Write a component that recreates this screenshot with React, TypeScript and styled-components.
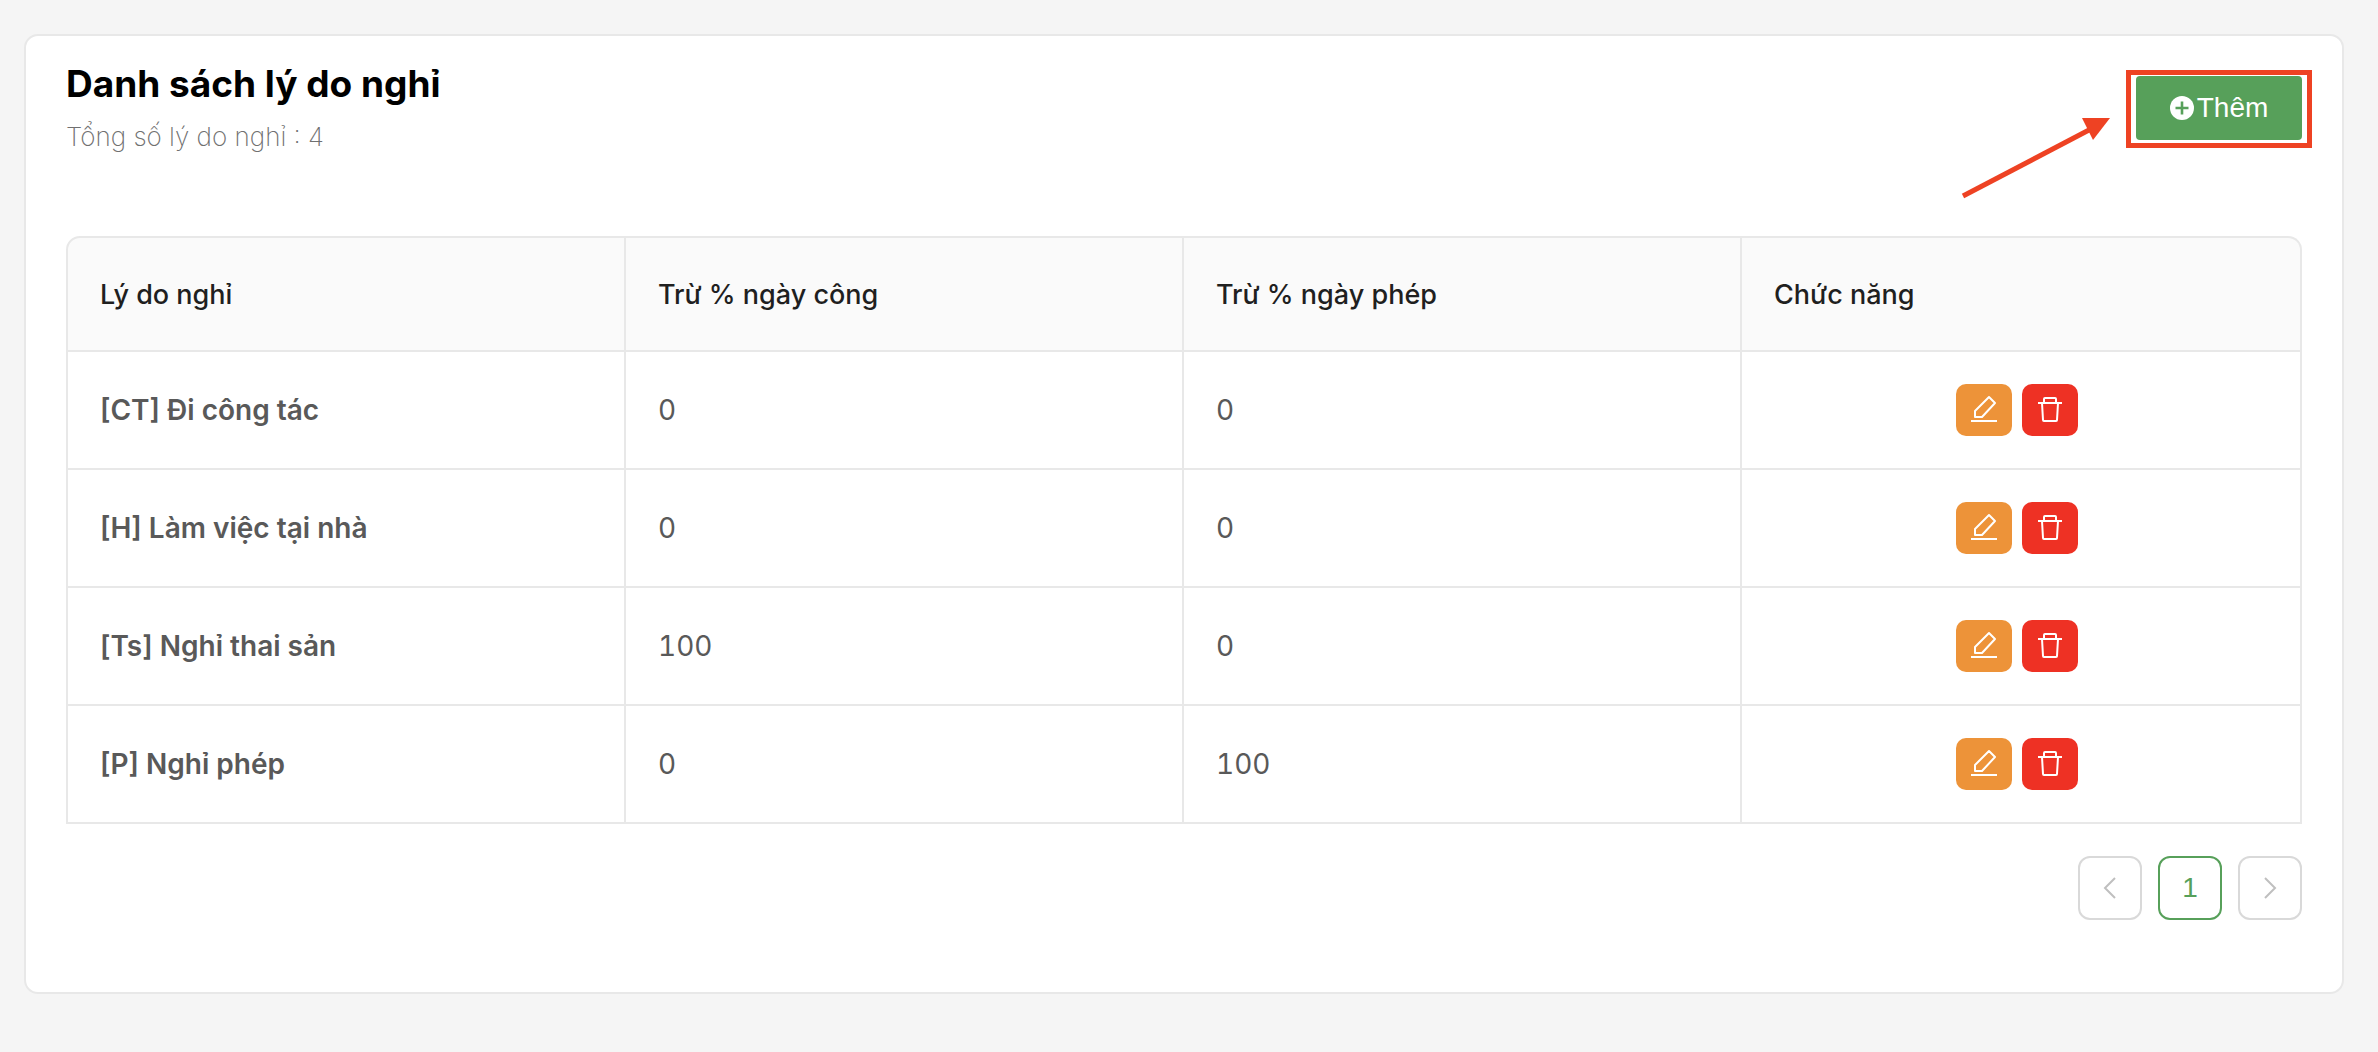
import React from "react";
import styled, { createGlobalStyle } from "styled-components";

const GlobalStyle = createGlobalStyle`
  html, body {
    margin: 0;
    padding: 0;
    background: #f5f5f5;
    font-family: "Inter", "Liberation Sans", sans-serif;
  }
`;

const Page = styled.div`
  box-sizing: border-box;
  width: 2378px;
  height: 1052px;
  padding: 34px 34px 58px 24px;
`;
const Card = styled.section`
  box-sizing: border-box;
  height: 960px;
  padding: 40px 40px 0;
  background: #fff;
  border: 2px solid #e8e8e8;
  border-radius: 14px;
`;
const Header = styled.header`
  display: flex;
  justify-content: space-between;
  align-items: flex-start;
  height: 160px;
`;
const Title = styled.h1`
  margin: -18px 0 0;
  font-size: 37px;
  line-height: 52px;
  font-weight: 700;
  color: #000;
`;
const Subtitle = styled.p`
  margin: 7px 0 0;
  font-size: 26px;
  line-height: 40px;
  font-weight: 200;
  color: #707070;
`;
const AddWrapper = styled.div`
  position: relative;
`;
const AddButton = styled.button`
  display: flex;
  align-items: center;
  justify-content: center;
  gap: 3px;
  width: 166px;
  height: 64px;
  padding: 0;
  border: 0;
  border-radius: 4px;
  background: #57a05a;
  color: #fff;
  font-family: "Liberation Sans", sans-serif;
  font-size: 28px;
`;
const Highlight = styled.div`
  position: absolute;
  left: -10px;
  top: -6px;
  width: 186px;
  height: 78px;
  box-sizing: border-box;
  border: 5px solid #ee4223;
`;
const Arrow = styled.svg`
  position: absolute;
  left: -175px;
  top: 42px;
`;
const Table = styled.table`
  width: 2236px;
  table-layout: fixed;
  border-collapse: separate;
  border-spacing: 0;
`;
const HeadCell = styled.th<{ $width: number }>`
  box-sizing: border-box;
  width: ${(props) => props.$width}px;
  height: 116px;
  padding: 0 32px;
  background: #fafafa;
  border-top: 2px solid #e8e8e8;
  border-right: 2px solid #e8e8e8;
  border-bottom: 2px solid #e8e8e8;
  text-align: left;
  font-size: 27px;
  font-weight: 500;
  color: #1f1f1f;

  &:first-child {
    border-left: 2px solid #e8e8e8;
    border-top-left-radius: 14px;
  }
  &:last-child {
    border-top-right-radius: 14px;
  }
`;
const Cell = styled.td<{ $strong?: boolean }>`
  box-sizing: border-box;
  height: 118px;
  padding: 0 32px;
  border-right: 2px solid #e8e8e8;
  border-bottom: 2px solid #e8e8e8;
  font-size: 28px;
  font-weight: ${(props) => (props.$strong ? 600 : 400)};
  font-variant-numeric: ${(props) => (props.$strong ? "normal" : "tabular-nums")};
  color: #595959;

  &:first-child {
    border-left: 2px solid #e8e8e8;
  }
`;
const Actions = styled.div`
  display: flex;
  justify-content: center;
  gap: 10px;
  padding-right: 8px;
`;
const ActionButton = styled.button<{ $color: string }>`
  display: block;
  width: 56px;
  height: 52px;
  padding: 0;
  border: 0;
  border-radius: 10px;
  background: ${(props) => props.$color};

  svg {
    display: block;
  }
`;
const Pagination = styled.nav`
  display: flex;
  justify-content: flex-end;
  gap: 16px;
  margin-top: 32px;
`;
const PageButton = styled.button<{ $active?: boolean }>`
  display: flex;
  align-items: center;
  justify-content: center;
  box-sizing: border-box;
  width: 64px;
  height: 64px;
  padding: 0;
  background: #fff;
  border: 2px solid ${(props) => (props.$active ? "#57a05a" : "#d9d9d9")};
  border-radius: 12px;
  color: #57a05a;
  font-family: "Liberation Sans", sans-serif;
  font-size: 28px;
`;

const rows = [
  { name: "[CT] Đi công tác", workday: 0, leave: 0 },
  { name: "[H] Làm việc tại nhà", workday: 0, leave: 0 },
  { name: "[Ts] Nghỉ thai sản", workday: 100, leave: 0 },
  { name: "[P] Nghỉ phép", workday: 0, leave: 100 },
];

const PlusIcon = () => (
  <svg width="24" height="24" viewBox="0 0 24 24">
    <circle cx="12" cy="12" r="12" fill="#fff" />
    <path d="M12 5.5v13M5.5 12h13" stroke="#57a05a" strokeWidth="2.6" />
  </svg>
);

const EditIcon = () => (
  <svg width="56" height="52" viewBox="0 0 56 52" fill="none" stroke="#fff" strokeWidth="2">
    <path d="M15 37h26" />
    <path d="M19 33v-6l14-14 6 6-13 14z" strokeLinejoin="round" />
  </svg>
);

const TrashIcon = () => (
  <svg width="56" height="52" viewBox="0 0 56 52" fill="none" stroke="#fff" strokeWidth="2">
    <path d="M16 19h24" />
    <path d="M20 19l1 17a1 1 0 0 0 1 1h12a1 1 0 0 0 1-1l1-17" />
    <path d="M22 19v-4a1 1 0 0 1 1-1h10a1 1 0 0 1 1 1v4" />
  </svg>
);

const Chevron = ({ d }: { d: string }) => (
  <svg width="16" height="22" viewBox="0 0 16 22" fill="none" stroke="#bfbfbf" strokeWidth="2">
    <path d={d} />
  </svg>
);

export default function App() {
  return (
    <>
      <GlobalStyle />
      <Page>
        <Card>
          <Header>
            <div>
              <Title>Danh sách lý do nghỉ</Title>
              <Subtitle>Tổng số lý do nghỉ : 4</Subtitle>
            </div>
            <AddWrapper>
              <AddButton>
                <PlusIcon />
                Thêm
              </AddButton>
              <Highlight />
              <Arrow width="152" height="82" viewBox="0 0 152 82">
                <path d="M2 78L128 12" stroke="#ee4223" strokeWidth="5" />
                <path d="M121 0h28l-17 22z" fill="#ee4223" />
              </Arrow>
            </AddWrapper>
          </Header>
          <Table>
            <thead>
              <tr>
                <HeadCell $width={560}>Lý do nghỉ</HeadCell>
                <HeadCell $width={558}>Trừ % ngày công</HeadCell>
                <HeadCell $width={558}>Trừ % ngày phép</HeadCell>
                <HeadCell $width={560}>Chức năng</HeadCell>
              </tr>
            </thead>
            <tbody>
              {rows.map((row) => (
                <tr key={row.name}>
                  <Cell $strong>{row.name}</Cell>
                  <Cell>{row.workday}</Cell>
                  <Cell>{row.leave}</Cell>
                  <Cell>
                    <Actions>
                      <ActionButton $color="#ed9339">
                        <EditIcon />
                      </ActionButton>
                      <ActionButton $color="#ee3124">
                        <TrashIcon />
                      </ActionButton>
                    </Actions>
                  </Cell>
                </tr>
              ))}
            </tbody>
          </Table>
          <Pagination>
            <PageButton>
              <Chevron d="M13 1L3 11l10 10" />
            </PageButton>
            <PageButton $active>1</PageButton>
            <PageButton>
              <Chevron d="M3 1l10 10L3 21" />
            </PageButton>
          </Pagination>
        </Card>
      </Page>
    </>
  );
}
